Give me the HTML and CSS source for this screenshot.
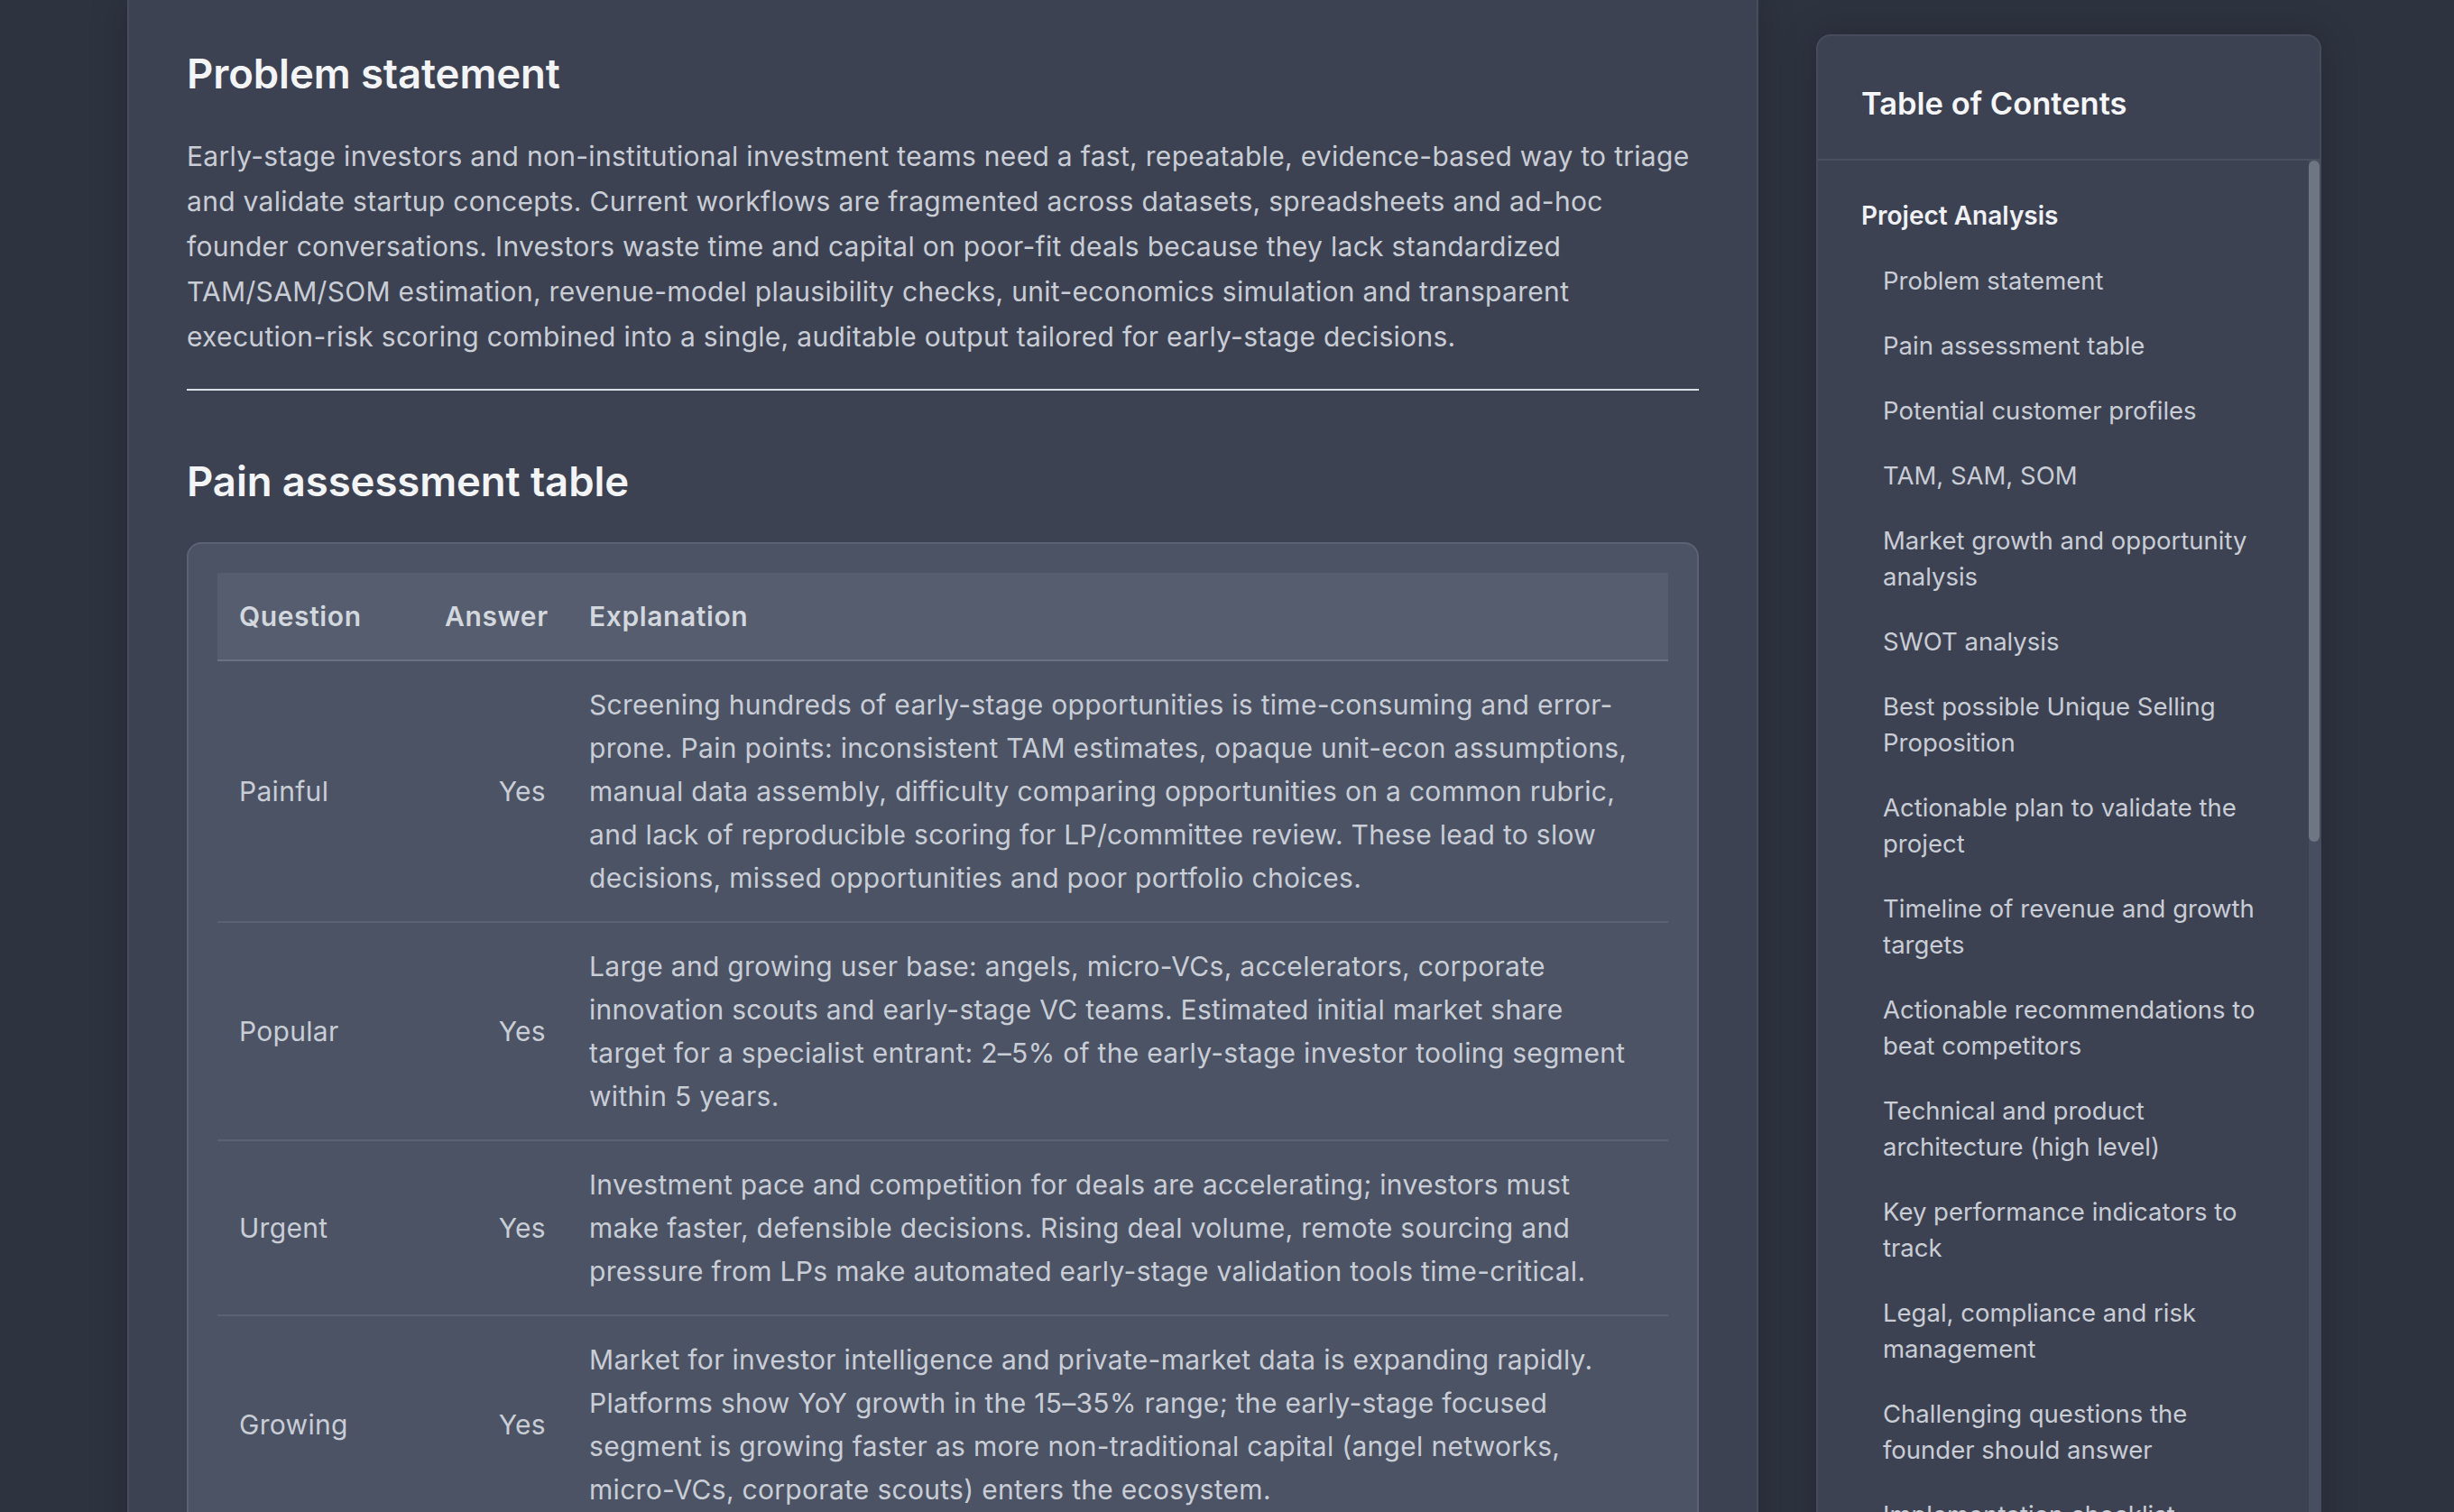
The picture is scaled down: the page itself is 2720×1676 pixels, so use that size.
FILE: index.html
```html
<!DOCTYPE html>
<html lang="en">
<head>
<meta charset="utf-8">
<title>Project Analysis</title>
<link rel="stylesheet" href="styles.css">
</head>
<body>
<div class="layout">
  <main class="doc">
    <h2 class="doc-title">Problem statement</h2>
    <p class="doc-text">Early-stage investors and non-institutional investment teams need a fast, repeatable, evidence-based way to triage and validate startup concepts. Current workflows are fragmented across datasets, spreadsheets and ad-hoc founder conversations. Investors waste time and capital on poor-fit deals because they lack standardized TAM/SAM/SOM estimation, revenue-model plausibility checks, unit-economics simulation and transparent execution-risk scoring combined into a single, auditable output tailored for early-stage decisions.</p>
    <hr class="doc-rule">
    <h2 class="doc-title second">Pain assessment table</h2>
    <div class="table-card">
      <table class="pain-table">
        <colgroup>
          <col class="col-q">
          <col class="col-a">
          <col class="col-e">
        </colgroup>
        <thead>
          <tr><th class="q">Question</th><th class="a">Answer</th><th class="e">Explanation</th></tr>
        </thead>
        <tbody>
          <tr>
            <td class="q">Painful</td>
            <td class="a">Yes</td>
            <td class="e">Screening hundreds of early-stage opportunities is time-consuming and error-prone. Pain points: inconsistent TAM estimates, opaque unit-econ assumptions, manual data assembly, difficulty comparing opportunities on a common rubric, and lack of reproducible scoring for LP/committee review. These lead to slow decisions, missed opportunities and poor portfolio choices.</td>
          </tr>
          <tr>
            <td class="q">Popular</td>
            <td class="a">Yes</td>
            <td class="e">Large and growing user base: angels, micro-VCs, accelerators, corporate innovation scouts and early-stage VC teams. Estimated initial market share target for a specialist entrant: 2–5% of the early-stage investor tooling segment within 5 years.</td>
          </tr>
          <tr>
            <td class="q">Urgent</td>
            <td class="a">Yes</td>
            <td class="e">Investment pace and competition for deals are accelerating; investors must make faster, defensible decisions. Rising deal volume, remote sourcing and pressure from LPs make automated early-stage validation tools time-critical.</td>
          </tr>
          <tr>
            <td class="q">Growing</td>
            <td class="a">Yes</td>
            <td class="e">Market for investor intelligence and private-market data is expanding rapidly. Platforms show YoY growth in the 15–35% range; the early-stage focused segment is growing faster as more non-traditional capital (angel networks, micro-VCs, corporate scouts) enters the ecosystem.</td>
          </tr>
        </tbody>
      </table>
    </div>
  </main>

  <aside class="toc">
    <div class="toc-head">Table of Contents</div>
    <div class="toc-body">
      <nav class="toc-list">
        <div class="toc-section">Project Analysis</div>
        <a class="toc-item">Problem statement</a>
        <a class="toc-item">Pain assessment table</a>
        <a class="toc-item">Potential customer profiles</a>
        <a class="toc-item">TAM, SAM, SOM</a>
        <a class="toc-item">Market growth and opportunity analysis</a>
        <a class="toc-item">SWOT analysis</a>
        <a class="toc-item">Best possible Unique Selling Proposition</a>
        <a class="toc-item">Actionable plan to validate the project</a>
        <a class="toc-item">Timeline of revenue and growth targets</a>
        <a class="toc-item">Actionable recommendations to beat competitors</a>
        <a class="toc-item">Technical and product architecture (high level)</a>
        <a class="toc-item">Key performance indicators to track</a>
        <a class="toc-item">Legal, compliance and risk management</a>
        <a class="toc-item">Challenging questions the founder should answer</a>
        <a class="toc-item">Implementation checklist</a>
      </nav>
      <div class="scroll-track"><div class="scroll-thumb"></div></div>
    </div>
  </aside>
</div>
</body>
</html>
```

FILE: styles.css
```css
* { box-sizing: border-box; }

html, body {
  margin: 0;
  padding: 0;
  background: #2e3340;
  height: 100%;
  overflow: hidden;
}

body {
  font-family: Inter, "Noto Sans", "Liberation Sans", sans-serif;
  color: #c9cdd5;
  -webkit-font-smoothing: antialiased;
}

.layout {
  display: flex;
  align-items: flex-start;
  gap: 64px;
  padding-left: 141px;
}

/* main document card */
.doc {
  width: 1808px;
  flex: none;
  background: #3d4252;
  border-left: 2px solid #474d5c;
  border-right: 2px solid #474d5c;
  padding: 52px 64px 200px 64px;
  box-shadow: 0 0 40px rgba(0, 0, 0, 0.22);
}

.doc-title {
  margin: 0 0 36px 0;
  font-size: 45.5px;
  line-height: 60px;
  font-weight: 600;
  color: #f3f4f6;
  letter-spacing: -0.1px;
}

.doc-title.second {
  margin-top: 71px;
  margin-bottom: 37px;
}

.doc-text {
  margin: 0;
  font-size: 30px;
  line-height: 50px;
  letter-spacing: 0.3px;
  color: #c9cdd5;
}

.doc-rule {
  margin: 33px 0 0 0;
  border: 0;
  height: 2px;
  background: #dcdfe4;
}

/* table */
.table-card {
  background: #4b5365;
  border: 2px solid #5b6375;
  border-radius: 16px;
  padding: 32px;
}

.pain-table {
  width: 100%;
  border-collapse: collapse;
  table-layout: fixed;
  font-size: 30px;
  line-height: 48px;
  letter-spacing: 0.3px;
}

.col-q { width: 228px; }
.col-a { width: 160px; }

.pain-table th {
  background: #555d6e;
  color: #d3d7de;
  font-weight: 600;
  letter-spacing: 0.6px;
  text-align: left;
  padding: 24px;
  border-bottom: 2px solid #6a7283;
}

.pain-table td {
  padding: 24px;
  color: #c9cdd5;
  vertical-align: middle;
  border-bottom: 2px solid #5a6273;
}

.pain-table .a { text-align: right; }

.pain-table td.e { padding-right: 32px; }

/* table of contents */
.toc {
  width: 560px;
  flex: none;
  margin-top: 38px;
  background: #3d4252;
  border: 2px solid #464c5b;
  border-radius: 16px;
  overflow: hidden;
  box-shadow: 0 0 40px rgba(0, 0, 0, 0.22);
}

.toc-head {
  padding: 47px 48px 33px 48px;
  font-size: 34.5px;
  line-height: 56px;
  font-weight: 600;
  color: #f5f6f8;
  border-bottom: 2px solid #4a5060;
}

.toc-body {
  display: flex;
  align-items: stretch;
}

.toc-list {
  flex: 1;
  display: flex;
  flex-direction: column;
  padding: 41px 48px 40px 48px;
}

.toc-section {
  font-size: 28px;
  line-height: 40px;
  font-weight: 600;
  color: #f0f1f4;
  margin-bottom: 16px;
}

.toc-item {
  display: block;
  padding: 16px 0 16px 24px;
  font-size: 27.5px;
  line-height: 40px;
  color: #c9cdd5;
  text-decoration: none;
}

.scroll-track {
  width: 12px;
  flex: none;
  background: #474e5f;
}

.scroll-thumb {
  height: 755px;
  border-radius: 6px;
  background: #6e7583;
}
```
